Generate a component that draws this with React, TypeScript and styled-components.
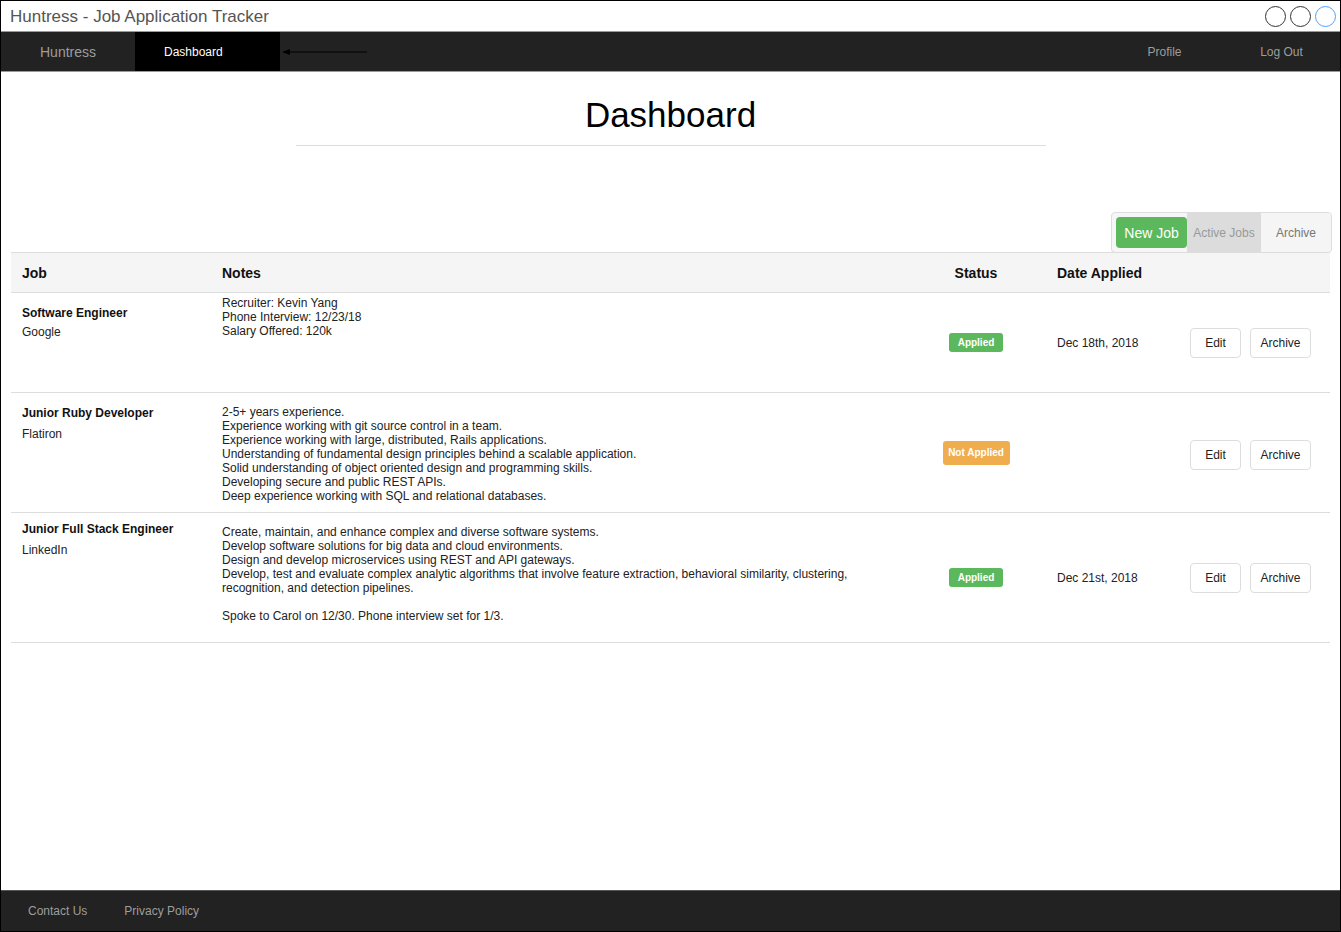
import React from "react";
import styled, { createGlobalStyle } from "styled-components";

const Global = createGlobalStyle`
  html, body { margin: 0; padding: 0; background: #fff; }
  body { font-family: "Liberation Sans", Arial, Helvetica, sans-serif; }
  * { box-sizing: border-box; }
`;

const Frame = styled.div`
  width: 1341px;
  height: 932px;
  border: 1px solid #000;
  display: flex;
  flex-direction: column;
  background: #fff;
  overflow: hidden;
`;

const TitleBar = styled.div`
  height: 30px;
  display: flex;
  align-items: center;
  justify-content: space-between;
  padding: 0 4px 0 9px;
`;

const WindowTitle = styled.div`
  font-size: 17px;
  color: #555;
  padding-top: 2px;
`;

const Dots = styled.div`
  display: flex;
  gap: 4px;
  padding-top: 1px;
`;

const Dot = styled.span<{ $blue?: boolean }>`
  width: 21px;
  height: 21px;
  border-radius: 50%;
  border: 1px solid ${(p) => (p.$blue ? "#4da3ff" : "#333")};
`;

const Nav = styled.nav`
  height: 41px;
  background: #222;
  border-top: 1px solid #9a9a9a;
  border-bottom: 1px solid #9a9a9a;
  display: flex;
  align-items: stretch;
`;

const Brand = styled.div`
  width: 134px;
  display: flex;
  align-items: center;
  justify-content: center;
  color: #9d9d9d;
  font-size: 14px;
`;

const ActiveTab = styled.div`
  width: 145px;
  background: #000;
  color: #fff;
  font-size: 12px;
  display: flex;
  align-items: center;
  padding-left: 29px;
`;

const Arrow = styled.svg`
  align-self: center;
  margin-left: 2px;
`;

const NavRight = styled.div`
  margin-left: auto;
  display: flex;
`;

const NavLink = styled.div`
  width: 117px;
  display: flex;
  align-items: center;
  justify-content: center;
  color: #9d9d9d;
  font-size: 12px;
`;

const Main = styled.main`
  flex: 1;
  display: flex;
  flex-direction: column;
  padding: 23px 10px 0;
`;

const PageTitle = styled.h1`
  margin: 0;
  font-size: 35px;
  line-height: 40px;
  font-weight: 400;
  color: #000;
  text-align: center;
`;

const Rule = styled.hr`
  width: 750px;
  margin: 10px auto 0;
  border: 0;
  border-top: 1px solid #ddd;
`;

const Toggle = styled.div`
  align-self: flex-end;
  margin: 66px -2px -1px 0;
  height: 41px;
  display: flex;
  border: 1px solid #ddd;
  border-radius: 4px;
  background: #f6f6f6;
  overflow: hidden;
  position: relative;
  z-index: 1;
`;

const NewJob = styled.div`
  width: 71px;
  margin: 4px 0 4px 4px;
  border-radius: 4px;
  background: #5cb85c;
  color: #fff;
  font-size: 14px;
  display: flex;
  align-items: center;
  justify-content: center;
`;

const Seg = styled.div<{ $active?: boolean; $w: number }>`
  width: ${(p) => p.$w}px;
  background: ${(p) => (p.$active ? "#dcdcdc" : "#f5f5f5")};
  color: ${(p) => (p.$active ? "#999" : "#777")};
  font-size: 12px;
  display: flex;
  align-items: center;
  justify-content: center;
`;

const Table = styled.div`
  border-top: 1px solid #ddd;
  display: flex;
  flex-direction: column;
`;

const cols = "200px 712px 84px 123px 1fr";

const HeadRow = styled.div`
  display: grid;
  grid-template-columns: ${cols};
  height: 40px;
  padding-left: 11px;
  background: #f5f5f5;
  border-bottom: 1px solid #ddd;
  align-items: center;
`;

const HeadCell = styled.div<{ $center?: boolean; $pl?: number }>`
  font-size: 14px;
  font-weight: 700;
  color: #111;
  white-space: nowrap;
  text-align: ${(p) => (p.$center ? "center" : "left")};
  padding-left: ${(p) => p.$pl ?? 0}px;
`;

const Row = styled.div<{ $h: number }>`
  display: grid;
  grid-template-columns: ${cols};
  height: ${(p) => p.$h}px;
  padding: 0 19px 0 11px;
  border-bottom: 1px solid #ddd;
  font-size: 12px;
  color: #222;
`;

const JobCell = styled.div<{ $pt: number; $gap: number }>`
  padding-top: ${(p) => p.$pt}px;
  display: flex;
  flex-direction: column;
  gap: ${(p) => p.$gap}px;
  line-height: 14px;
`;

const JobTitle = styled.div`
  font-weight: 700;
  color: #111;
`;

const Notes = styled.div<{ $pt: number }>`
  padding-top: ${(p) => p.$pt}px;
  line-height: 14px;
  white-space: pre-line;
`;

const Centered = styled.div`
  display: flex;
  align-items: center;
  justify-content: center;
`;

const DateCell = styled.div`
  display: flex;
  align-items: center;
  padding-left: 39px;
  white-space: nowrap;
`;

const Badge = styled.span<{ $kind: "ok" | "no" }>`
  display: inline-flex;
  align-items: center;
  justify-content: center;
  width: ${(p) => (p.$kind === "ok" ? 54 : 67)}px;
  height: ${(p) => (p.$kind === "ok" ? 19 : 24)}px;
  border-radius: 3px;
  background: ${(p) => (p.$kind === "ok" ? "#5cb85c" : "#f0ad4e")};
  color: #fff;
  font-size: 10px;
  font-weight: 700;
`;

const Actions = styled.div<{ $dy: number }>`
  display: flex;
  align-items: center;
  justify-content: flex-end;
  gap: 9px;
  padding-top: ${(p) => p.$dy}px;
`;

const Btn = styled.div<{ $w: number }>`
  width: ${(p) => p.$w}px;
  height: 30px;
  border: 1px solid #ddd;
  border-radius: 4px;
  display: flex;
  align-items: center;
  justify-content: center;
  font-size: 12px;
  color: #222;
  background: #fff;
`;

const Footer = styled.footer`
  height: 41px;
  background: #222;
  border-top: 1px solid #555;
  display: flex;
  align-items: center;
  padding-left: 27px;
  gap: 37px;
`;

const FootLink = styled.span`
  color: #9d9d9d;
  font-size: 12px;
`;

type Job = {
  title: string;
  company: string;
  notes: string;
  status: "ok" | "no";
  date: string;
  h: number;
  notesPt: number;
  jobPt: number;
  jobGap: number;
  btnDy: number;
};

const jobs: Job[] = [
  {
    title: "Software Engineer",
    company: "Google",
    notes: "Recruiter: Kevin Yang\nPhone Interview: 12/23/18\nSalary Offered: 120k",
    status: "ok",
    date: "Dec 18th, 2018",
    h: 100,
    notesPt: 3,
    jobPt: 13,
    jobGap: 5,
    btnDy: 0,
  },
  {
    title: "Junior Ruby Developer",
    company: "Flatiron",
    notes:
      "2-5+ years experience.\nExperience working with git source control in a team.\nExperience working with large, distributed, Rails applications.\nUnderstanding of fundamental design principles behind a scalable application.\nSolid understanding of object oriented design and programming skills.\nDeveloping secure and public REST APIs.\nDeep experience working with SQL and relational databases.",
    status: "no",
    date: "",
    h: 120,
    notesPt: 12,
    jobPt: 13,
    jobGap: 7,
    btnDy: 5,
  },
  {
    title: "Junior Full Stack Engineer",
    company: "LinkedIn",
    notes:
      "Create, maintain, and enhance complex and diverse software systems.\nDevelop software solutions for big data and cloud environments.\nDesign and develop microservices using REST and API gateways.\nDevelop, test and evaluate complex analytic algorithms that involve feature extraction, behavioral similarity, clustering,\nrecognition, and detection pipelines.\n\nSpoke to Carol on 12/30. Phone interview set for 1/3.",
    status: "ok",
    date: "Dec 21st, 2018",
    h: 130,
    notesPt: 12,
    jobPt: 9,
    jobGap: 7,
    btnDy: 0,
  },
];

export default function App() {
  return (
    <>
      <Global />
      <Frame>
        <TitleBar>
          <WindowTitle>Huntress - Job Application Tracker</WindowTitle>
          <Dots>
            <Dot />
            <Dot />
            <Dot $blue />
          </Dots>
        </TitleBar>
        <Nav>
          <Brand>Huntress</Brand>
          <ActiveTab>Dashboard</ActiveTab>
          <Arrow width="86" height="10" viewBox="0 0 86 10">
            <line x1="2" y1="5" x2="85" y2="5" stroke="#000" strokeWidth="1" />
            <polygon points="0,5 8,2 8,8" fill="#000" />
          </Arrow>
          <NavRight>
            <NavLink>Profile</NavLink>
            <NavLink>Log Out</NavLink>
          </NavRight>
        </Nav>
        <Main>
          <PageTitle>Dashboard</PageTitle>
          <Rule />
          <Toggle>
            <NewJob>New Job</NewJob>
            <Seg $active $w={74}>Active Jobs</Seg>
            <Seg $w={70}>Archive</Seg>
          </Toggle>
          <Table>
            <HeadRow>
              <HeadCell>Job</HeadCell>
              <HeadCell>Notes</HeadCell>
              <HeadCell $center>Status</HeadCell>
              <HeadCell $pl={39}>Date Applied</HeadCell>
              <div />
            </HeadRow>
            {jobs.map((j) => (
              <Row key={j.title} $h={j.h}>
                <JobCell $pt={j.jobPt} $gap={j.jobGap}>
                  <JobTitle>{j.title}</JobTitle>
                  <div>{j.company}</div>
                </JobCell>
                <Notes $pt={j.notesPt}>{j.notes}</Notes>
                <Centered>
                  <Badge $kind={j.status}>{j.status === "ok" ? "Applied" : "Not Applied"}</Badge>
                </Centered>
                <DateCell>{j.date}</DateCell>
                <Actions $dy={j.btnDy}>
                  <Btn $w={51}>Edit</Btn>
                  <Btn $w={61}>Archive</Btn>
                </Actions>
              </Row>
            ))}
          </Table>
        </Main>
        <Footer>
          <FootLink>Contact Us</FootLink>
          <FootLink>Privacy Policy</FootLink>
        </Footer>
      </Frame>
    </>
  );
}
